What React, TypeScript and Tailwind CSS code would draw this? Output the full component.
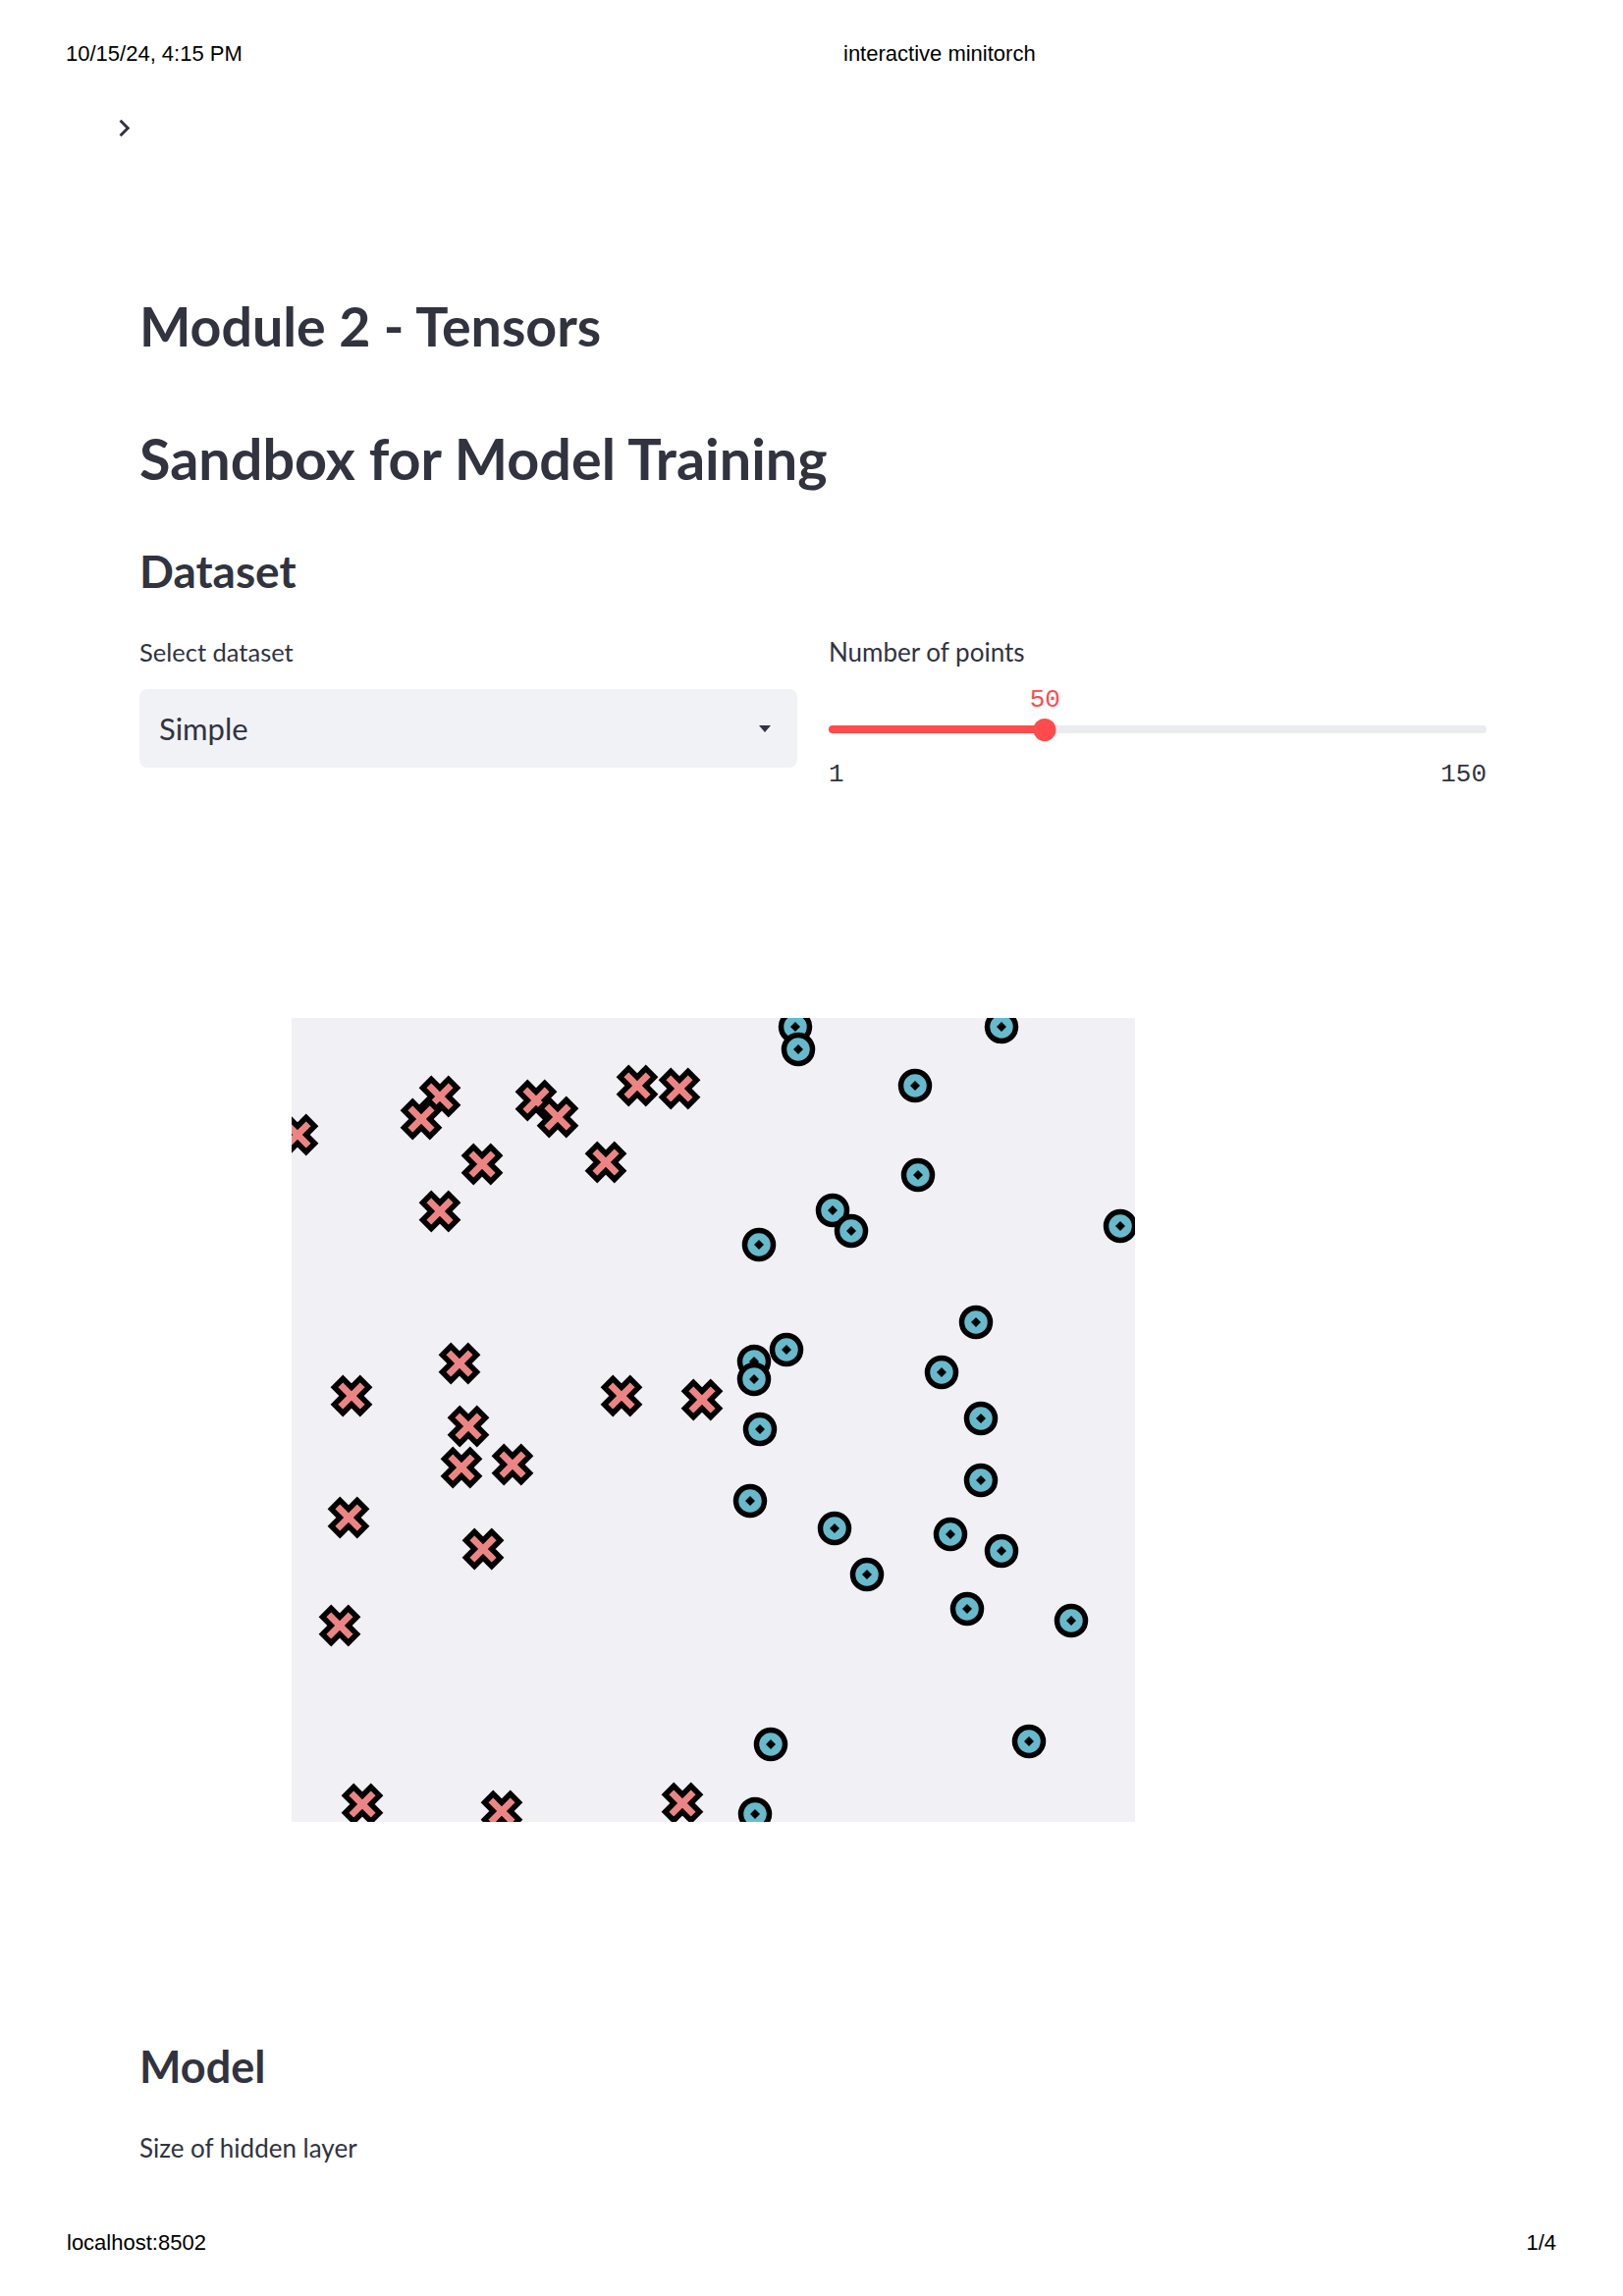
import React from "react";

type Pt = [number, number];

const crosses: Pt[] = [
  [6, 119], [151, 80], [132, 103], [249, 84], [271, 101], [352, 69], [395, 72],
  [194, 149], [320, 147], [151, 197], [61, 385], [171, 352], [336, 385], [418, 389],
  [180, 416], [173, 458], [225, 455], [58, 509], [195, 541], [49, 619], [72, 801],
  [214, 808], [398, 800],
];

const dots: Pt[] = [
  [513, 9], [516, 32], [723, 9], [635, 69], [638, 160], [551, 196], [570, 217],
  [476, 231], [844, 212], [697, 310], [504, 338], [471, 350], [471, 368], [662, 361],
  [477, 419], [702, 408], [702, 471], [467, 492], [553, 520], [671, 526], [723, 543],
  [586, 567], [688, 602], [794, 614], [488, 740], [751, 737], [472, 811],
];

const crossPath = (x: number, y: number) => {
  const r = 8.75;
  const steps: Pt[] = [
    [r, r], [r, -r], [-r, -r], [r, -r], [-r, -r], [-r, r],
    [-r, -r], [-r, r], [r, r], [-r, r], [r, r],
  ];
  return `M${x},${y + r}` + steps.map(([a, b]) => `l${a},${b}`).join("") + "Z";
};

function Scatter() {
  return (
    <svg width={859} height={819} className="block bg-[#F0F0F5]" style={{ overflow: "hidden" }}>
      {crosses.map(([x, y], i) => (
        <path key={"x" + i} d={crossPath(x, y)} fill="#EC8484" stroke="#000" strokeWidth={5.5} />
      ))}
      {dots.map(([x, y], i) => (
        <g key={"c" + i}>
          <circle cx={x} cy={y} r={14.5} fill="#66BACB" stroke="#000" strokeWidth={5.5} />
          <path d={`M${x},${y - 5}L${x + 5},${y}L${x},${y + 5}L${x - 5},${y}Z`} fill="#000" />
        </g>
      ))}
    </svg>
  );
}

function NumberSlider({ label, min, max, value }: { label: string; min: number; max: number; value: number }) {
  const pct = ((value - min) / (max - min)) * 100;
  return (
    <div className="flex flex-col">
      <label className="text-[26px] leading-[30px]">{label}</label>
      <div className="relative mt-[19px] h-[30px] font-['Liberation_Mono',monospace] text-[26px] leading-[30px] text-[#FF4B4B]">
        <span className="absolute -translate-x-1/2" style={{ left: `${pct}%` }}>
          {value}
        </span>
      </div>
      <div className="relative mt-[3px] flex h-6 items-center">
        <div className="h-2 w-full rounded-full bg-[#EBECF0]" />
        <div className="absolute left-0 h-2 rounded-full bg-[#FF4B4B]" style={{ width: `${pct}%` }} />
        <div
          className="absolute h-[23px] w-[23px] -translate-x-1/2 rounded-full bg-[#FF4B4B]"
          style={{ left: `${pct}%` }}
        />
      </div>
      <div className="mt-[19px] flex justify-between font-['Liberation_Mono',monospace] text-[26px] leading-[30px] text-[#31333F]">
        <span>{min}</span>
        <span>{max}</span>
      </div>
    </div>
  );
}

export default function App() {
  return (
    <div className="flex min-h-[2339px] w-[1653px] flex-col bg-white text-[#31333F]">
      <header className="flex pl-[67px] pt-[44px] font-['Liberation_Sans',Arial,sans-serif] text-[22px] leading-[22px] text-black">
        <span className="w-[792px]">10/15/24, 4:15 PM</span>
        <span>interactive minitorch</span>
      </header>

      <svg viewBox="0 0 24 24" className="ml-[109px] mt-[47px] h-[35px] w-[35px]" fill="#31333F">
        <path d="M10 6L8.59 7.41 13.17 12l-4.58 4.59L10 18l6-6z" />
      </svg>

      <main className="ml-[142px] w-[1372px] font-['Lato',sans-serif]">
        <h1 className="mt-[150px] text-[55.5px] font-bold leading-[68px]">Module 2 - Tensors</h1>
        <h2 className="mt-[67px] text-[57.5px] font-bold leading-[68px]">Sandbox for Model Training</h2>
        <h3 className="mt-[56px] text-[46px] font-bold leading-[50px]">Dataset</h3>

        <div className="mt-[42px] grid grid-cols-2 gap-8">
          <div className="flex flex-col">
            <label className="text-[25.5px] leading-[30px]">Select dataset</label>
            <div className="mt-[23px] flex h-20 items-center justify-between rounded-lg bg-[#F0F2F6] pl-5 pr-[27px]">
              <span className="text-[31px]">Simple</span>
              <svg width="12" height="7" viewBox="0 0 12 7">
                <path d="M0 0h12L6 7z" fill="#31333F" />
              </svg>
            </div>
          </div>
          <NumberSlider label="Number of points" min={1} max={150} value={50} />
        </div>

        <div className="ml-[155px] mt-[233px]">
          <Scatter />
        </div>

        <h3 className="mt-[224px] text-[45px] font-bold leading-[50px]">Model</h3>
        <p className="mt-[43px] text-[26px] leading-[30px]">Size of hidden layer</p>
      </main>

      <footer className="mt-auto flex justify-between px-[68px] pb-[43px] font-['Liberation_Sans',Arial,sans-serif] text-[22px] leading-[22px] text-black">
        <span>localhost:8502</span>
        <span>1/4</span>
      </footer>
    </div>
  );
}
